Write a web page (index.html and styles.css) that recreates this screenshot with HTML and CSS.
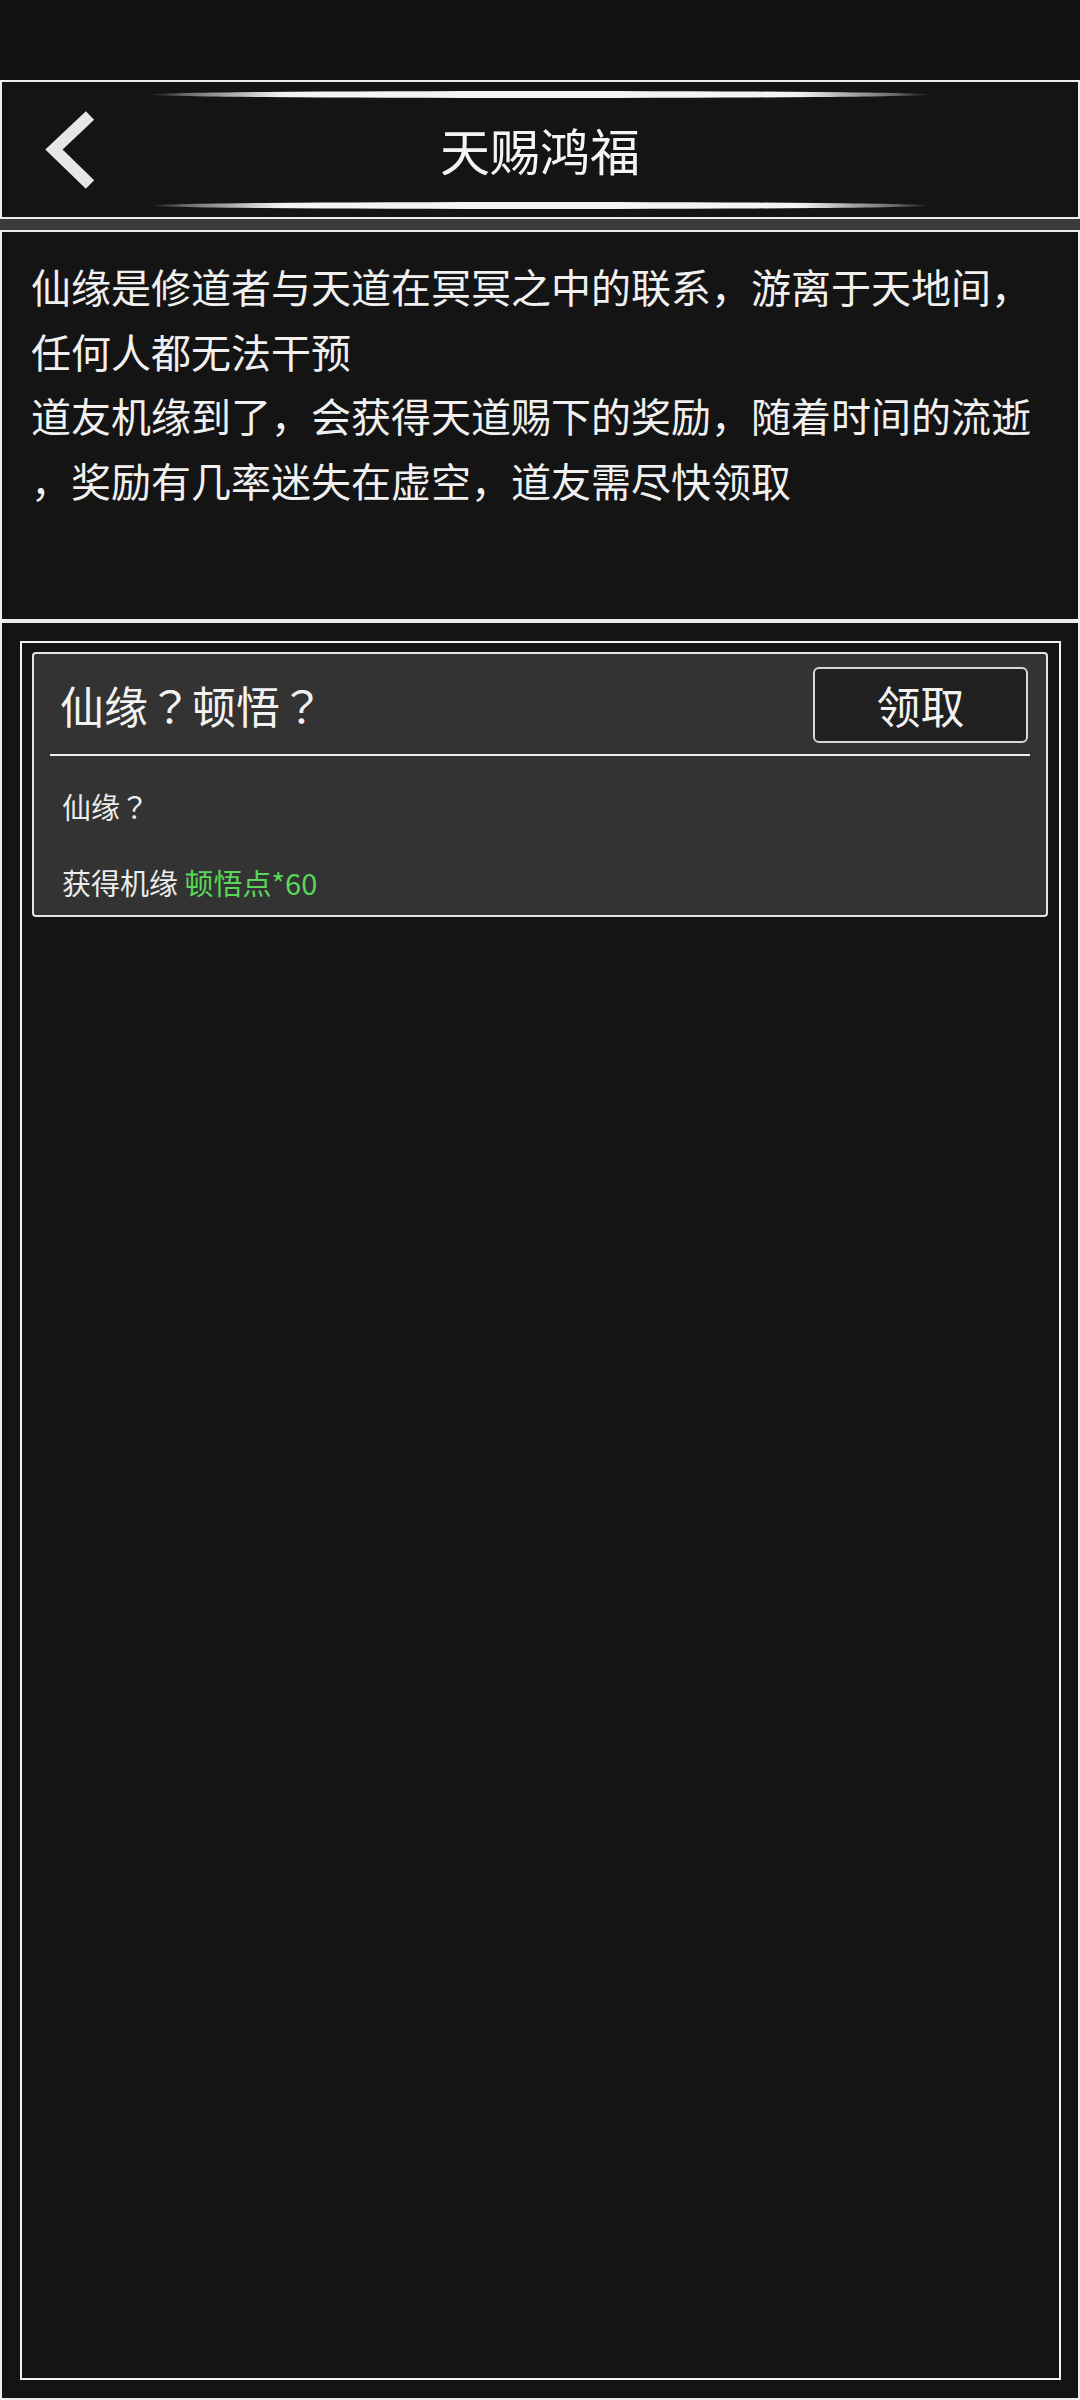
FILE: index.html
```html
<!DOCTYPE html>
<html lang="zh-CN">

<head>
  <meta charset="UTF-8" />
  <meta name="viewport" content="width=device-width, initial-scale=1.0" />
  <title>天赐鸿福</title>
  <link rel="stylesheet" href="styles.css">
</head>

<body>
  <!-- status bar area -->
  <div class="status-bar"></div>

  <!-- title bar -->
  <div class="header">
    <div class="header-side">
      <svg class="back-icon" width="60" height="90" viewBox="0 0 60 90">
        <polyline points="48,10.5 12,44.5 48,79.5" fill="none" stroke="#e6e6e6" stroke-width="12" stroke-linecap="butt" stroke-linejoin="miter" />
      </svg>
    </div>
    <div class="header-center">
      <div class="glow-line"></div>
      <h1 class="title">天赐鸿福</h1>
      <div class="glow-line"></div>
    </div>
    <div class="header-side"></div>
  </div>

  <div class="split-bar"></div>

  <!-- description -->
  <div class="desc">
    <p>仙缘是修道者与天道在冥冥之中的联系，游离于天地间，任何人都无法干预</p>
    <p>道友机缘到了，会获得天道赐下的奖励，随着时间的流逝，奖励有几率迷失在虚空，道友需尽快领取</p>
  </div>

  <!-- reward list -->
  <div class="panel">
    <div class="frame">
      <div class="card">
        <div class="card-head">
          <span class="card-title">仙缘<span class="qm">？</span>顿悟<span class="qm">？</span></span>
          <button class="claim-btn">领取</button>
        </div>
        <div class="card-line"></div>
        <div class="card-body">
          <div class="card-text">仙缘<span class="qm">？</span></div>
          <div class="card-text">获得机缘 <span class="reward">顿悟点*60</span></div>
        </div>
      </div>
    </div>
  </div>
</body>

</html>
```

FILE: styles.css
```css
* {
  box-sizing: border-box;
}

body {
  margin: 0;
  width: 1080px;
  height: 2400px;
  background: #141414;
  color: #f0f0f0;
  font-family: "Noto Sans CJK SC", "Noto Sans", sans-serif;
  display: flex;
  flex-direction: column;
  overflow: hidden;
}

.status-bar {
  height: 80px;
  background: #111111;
}

.header {
  height: 139px;
  border: 2px solid #ececec;
  background: #141414;
  display: grid;
  grid-template-columns: 1fr 780px 1fr;
}

.header-side {
  display: flex;
  align-items: center;
}

.back-icon {
  margin-left: 40px;
}

.header-center {
  display: flex;
  flex-direction: column;
  align-items: center;
  justify-content: space-between;
  padding: 9px 0 8px;
}

.glow-line {
  width: 780px;
  height: 7px;
  border-radius: 50%;
  background: linear-gradient(to right,
      rgba(255, 255, 255, 0) 0%,
      rgba(120, 120, 120, 0.8) 4%,
      #f4f4f4 17%,
      #f4f4f4 83%,
      rgba(120, 120, 120, 0.8) 96%,
      rgba(255, 255, 255, 0) 100%);
}

.title {
  margin: 0 0 3px;
  font-size: 50px;
  font-weight: 400;
  line-height: 60px;
  color: #f4f4f4;
}

.split-bar {
  height: 11px;
  background: #3a3a3a;
}

.desc {
  height: 391px;
  border: 2px solid #ececec;
  padding: 22px 29px 0;
  font-size: 40px;
  line-height: 64.6px;
  line-break: anywhere;
}

.desc p {
  margin: 0;
}

.panel {
  flex: 1;
  border: 2px solid #ececec;
  padding: 18px 17px 18px 18px;
  display: flex;
}

.frame {
  flex: 1;
  border: 2px solid #f2f2f2;
  padding: 9px 11px 0 10px;
}

.card {
  background: #333333;
  border: 2px solid #e4e4e4;
  border-radius: 4px;
}

.card-head {
  display: flex;
  align-items: center;
  justify-content: space-between;
  padding: 13px 18px 11px 26px;
}

.card-title {
  font-size: 44px;
  line-height: 60px;
  color: #f2f2f2;
}

/* full width question mark, centred in its cell */
.qm {
  display: inline-block;
  width: 1em;
  text-align: center;
  font-family: "Noto Sans CJK JP", "Noto Sans CJK SC", sans-serif;
}

.claim-btn {
  width: 215px;
  height: 76px;
  background: #202020;
  border: 2px solid #d6d6d6;
  border-radius: 6px;
  color: #f2f2f2;
  font-family: inherit;
  font-size: 44px;
  padding: 0;
  cursor: pointer;
}

.card-line {
  height: 2px;
  margin: 0 16px;
  background: #f0f0f0;
}

.card-body {
  padding: 30px 28px 13px;
  display: flex;
  flex-direction: column;
  gap: 36px;
}

.card-text {
  font-size: 29px;
  line-height: 40px;
  color: #ececec;
}

.reward {
  color: #5ad65a;
}
```
